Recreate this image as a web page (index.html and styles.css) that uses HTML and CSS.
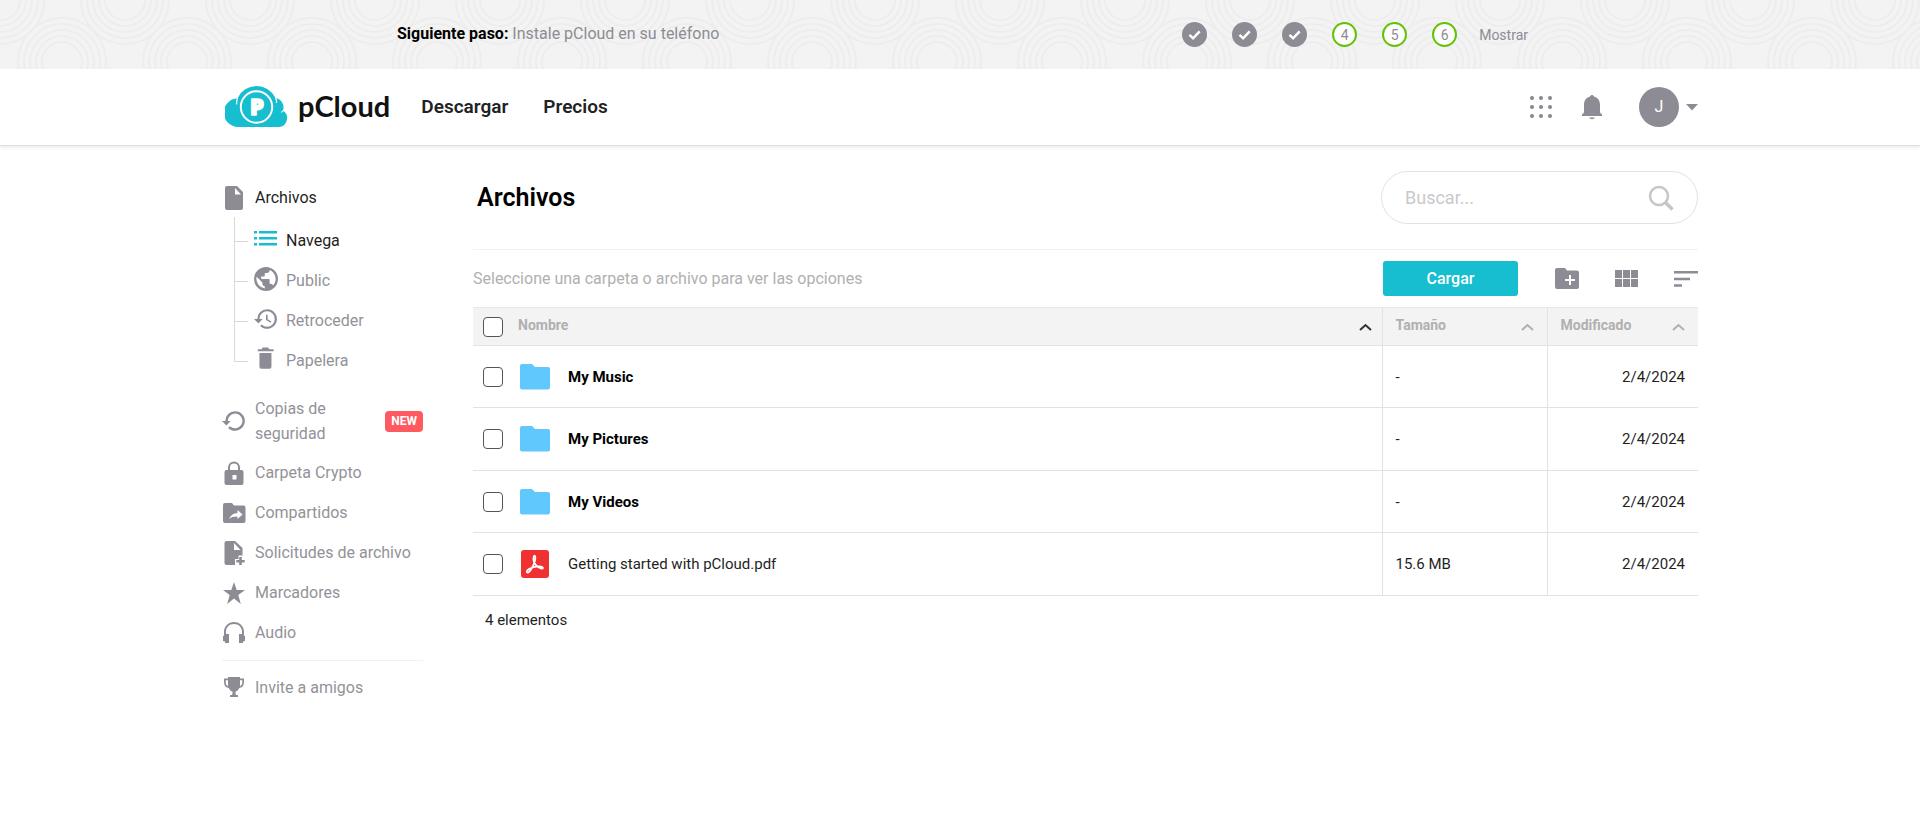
FILE: index.html
```html
<!DOCTYPE html>
<html lang="es">
<head>
<meta charset="utf-8">
<meta name="viewport" content="width=device-width, initial-scale=1">
<title>pCloud - Archivos</title>
<link rel="stylesheet" href="styles.css">
</head>
<body>
<section class="banner">
  <svg class="banner-pattern" aria-hidden="true">
    <defs>
      <pattern id="rings" width="125" height="125" patternUnits="userSpaceOnUse">
        <g fill="none" stroke="#ededed" stroke-width="2">
          <g id="ring"><circle r="20"/><circle r="26"/><circle r="32"/><circle r="38"/><circle r="44"/></g>
          <use href="#ring" x="125"/>
          <use href="#ring" x="62" y="62"/>
        </g>
      </pattern>
    </defs>
    <rect width="100%" height="100%" fill="url(#rings)"/>
  </svg>
  <div class="banner-inner">
    <p class="next-step"><strong>Siguiente paso:</strong> Instale pCloud en su teléfono</p>
    <ol class="steps">
      <li class="step done"><svg viewBox="0 0 25 25"><path d="M7.500 12.800l3.600 3.500 6.600-7"/></svg></li>
      <li class="step done"><svg viewBox="0 0 25 25"><path d="M7.500 12.800l3.600 3.500 6.600-7"/></svg></li>
      <li class="step done"><svg viewBox="0 0 25 25"><path d="M7.500 12.800l3.600 3.500 6.600-7"/></svg></li>
      <li class="step">4</li>
      <li class="step">5</li>
      <li class="step">6</li>
    </ol>
    <a class="show" href="#">Mostrar</a>
  </div>
</section>

<header class="header">
  <div class="wrap header-inner">
    <a class="logo" href="#">
      <svg width="63" height="42" viewBox="0 0 63 42" aria-hidden="true">
        <path fill="#17bed0" d="M14 41A14 14 0 0 1 12.500 12.200A21 21 0 0 1 50.500 12A9.500 9.500 0 0 1 58 24.500A9 9 0 0 1 54 41z"/>
        <path fill="none" stroke="#fff" stroke-width="1.200" stroke-linecap="round" d="M12.500 11.500q-1 3-.8 6.500M50.500 11.500q1.300 3 1 5M58.800 24.500q-1.500.3-2 1.600"/>
        <circle cx="31.500" cy="21" r="15.700" fill="none" stroke="#fff" stroke-width="2"/>
        <text class="logo-letter" x="32" y="29" text-anchor="middle">P</text>
      </svg>
      <span class="logo-name">pCloud</span>
    </a>
    <nav class="main-nav">
      <a href="#">Descargar</a>
      <a href="#">Precios</a>
    </nav>
    <div class="account">
      <button class="icon-button" aria-label="Aplicaciones">
        <svg width="24" height="24" viewBox="0 0 24 24" fill="#86868e"><circle cx="3" cy="3" r="2"/><circle cx="12" cy="3" r="2"/><circle cx="21" cy="3" r="2"/><circle cx="3" cy="12" r="2"/><circle cx="12" cy="12" r="2"/><circle cx="21" cy="12" r="2"/><circle cx="3" cy="21" r="2"/><circle cx="12" cy="21" r="2"/><circle cx="21" cy="21" r="2"/></svg>
      </button>
      <button class="icon-button bell" aria-label="Notificaciones">
        <svg width="22" height="26" viewBox="0 0 22 26" fill="#8d8c94"><path d="M11 1c1 0 1.700.6 1.900 1.500C17 3.500 19 6.700 19 11v7.500l2 2V22H1v-1.500l2-2V11c0-4.300 2-7.500 6.100-8.500C9.300 1.600 10 1 11 1z"/><path d="M8 23.500h6q-.8 1.700-3 1.700t-3-1.700z"/></svg>
      </button>
      <button class="icon-button profile" aria-label="Cuenta">
        <span class="avatar">J</span>
        <svg width="12" height="7" viewBox="0 0 12 7" fill="#8d8c94"><path d="M0 0h12L6 6.500z"/></svg>
      </button>
    </div>
  </div>
</header>

<div class="wrap page">
  <aside class="sidebar">
    <a class="item active" href="#">
      <svg class="icon" viewBox="0 0 24 24"><path d="M5 0h10l6 6v16a2 2 0 0 1-2 2H5a2 2 0 0 1-2-2V2a2 2 0 0 1 2-2zm8 2v6.500h6z"/></svg>
      <span>Archivos</span>
    </a>
    <ul class="tree">
      <li><a class="item active" href="#">
        <svg class="icon accent" viewBox="0 0 24 24"><path d="M0 4h3v2.500H0zm5 0h18v2.500H5zM0 10h3v2.500H0zm5 0h18v2.500H5zM0 16h3v2.500H0zm5 0h18v2.500H5z"/></svg>
        <span>Navega</span></a></li>
      <li><a class="item" href="#">
        <svg class="icon" viewBox="1 1 22 22"><path d="M12 1a11 11 0 1 0 0 22 11 11 0 0 0 0-22zm-1.100 19.730A8.790 8.790 0 0 1 3.200 12c0-.68.090-1.330.230-1.970L8.700 15.300v1.100c0 1.210.99 2.200 2.200 2.200v2.130zm7.590-2.790a2.180 2.180 0 0 0-2.090-1.520h-1.100v-3.300c0-.6-.5-1.100-1.100-1.100H7.600V9.800h2.200c.6 0 1.100-.5 1.100-1.100V6.500h2.200a2.200 2.200 0 0 0 2.200-2.200v-.45a8.790 8.790 0 0 1 3.190 14.090z"/></svg>
        <span>Public</span></a></li>
      <li><a class="item" href="#">
        <svg class="icon" viewBox="1 1 22 22"><path d="M13 3a9 9 0 0 0-9 9H1l3.890 3.890.070.140L9 12H6a7 7 0 1 1 7 7 6.970 6.970 0 0 1-4.940-2.060l-1.420 1.420A9 9 0 1 0 13 3zm-1 5v5l4.280 2.540.72-1.210-3.500-2.080V8z"/></svg>
        <span>Retroceder</span></a></li>
      <li><a class="item" href="#">
        <svg class="icon" viewBox="1 1 22 22"><path d="M6 19c0 1.100.9 2 2 2h7c1.100 0 2-.9 2-2V6.500H6zM19 3h-4l-1-1.500H9L8 3H4.500v2H19z"/></svg>
        <span>Papelera</span></a></li>
    </ul>
    <a class="item tall" href="#">
      <svg class="icon" viewBox="1 1 22 22"><path d="M13 3a9 9 0 0 0-9 9H1l4 4.200L9 12H6.300a6.700 6.700 0 1 1 2 4.700L6.600 18.400A9 9 0 1 0 13 3z"/></svg>
      <span>Copias de seguridad</span><em class="badge">NEW</em>
    </a>
    <a class="item" href="#">
      <svg class="icon" viewBox="0 0 24 24"><path d="M19.500 9H18V6.500a6 6 0 0 0-12 0V9H4.500A2 2 0 0 0 2.500 11v11a2 2 0 0 0 2 2h15a2 2 0 0 0 2-2V11a2 2 0 0 0-2-2zM8 9V6.500a4 4 0 0 1 8 0V9zm2.500 5h4v4.500h-4z"/></svg>
      <span>Carpeta Crypto</span>
    </a>
    <a class="item" href="#">
      <svg class="icon" viewBox="0 0 24 24"><path d="M3 2h7l2 2.500h9.500a2 2 0 0 1 2 2V20a2 2 0 0 1-2 2H3a2 2 0 0 1-2-2V4a2 2 0 0 1 2-2zm12.500 7v3c-4.500.3-7 2.500-8.500 6 2-2 4.700-2.700 8.500-2.600V18l5-4.500z"/></svg>
      <span>Compartidos</span>
    </a>
    <a class="item" href="#">
      <svg class="icon" viewBox="0 0 24 24"><path d="M4.500 0H13l7.500 7v7.500h-4V18H13v6H4.500A2 2 0 0 1 2.500 22V2a2 2 0 0 1 2-2zM12 2v7h6.500zm5.200 14h2.600v2.900h2.900v2.500h-2.900V24h-2.600v-2.600h-2.900v-2.500h2.900z"/></svg>
      <span>Solicitudes de archivo</span>
    </a>
    <a class="item" href="#">
      <svg class="icon" viewBox="0 0 24 24"><path d="M12 1l2.700 8H23l-6.700 4.900L18.800 23 12 17.500 5.200 23l2.500-9.100L1 9h8.300z"/></svg>
      <span>Marcadores</span>
    </a>
    <a class="item" href="#">
      <svg class="icon" viewBox="0 0 24 24"><path d="M12 1C6 1 2 5.500 2 11v3.500L1 15v5l2 .5V22h4v-9H4v-2c0-4.500 3.200-8 8-8s8 3.500 8 8v2h-3v9h4v-1.500l2-.5v-5l-1-.5V11C22 5.500 18 1 12 1z"/></svg>
      <span>Audio</span>
    </a>
    <hr>
    <a class="item" href="#">
      <svg class="icon" viewBox="0 0 24 24"><path d="M6 1h12v1.500h4V6c0 3.500-1.500 5.500-4.700 6-1 2-2.200 3.200-3.800 3.600V18c0 1 1.500 1 2.500 1.300V21H8v-1.700C9 19 10.500 19 10.500 18v-2.400C8.900 15.200 7.700 14 6.700 12 3.500 11.500 2 9.500 2 6V2.500h4zM3.700 4.300V6c0 2.200.6 3.400 2.300 4V4.300zm14.300 0V10c1.700-.6 2.300-1.800 2.300-4V4.300z"/></svg>
      <span>Invite a amigos</span>
    </a>
  </aside>

  <main class="content">
    <div class="title-row">
      <h1>Archivos</h1>
      <form class="search">
        <input type="search" placeholder="Buscar..." aria-label="Buscar">
        <button class="icon-button" type="button" aria-label="Buscar">
          <svg width="26" height="26" viewBox="0 0 26 26" fill="none" stroke="#c6c6c8"><circle cx="11" cy="11" r="9" stroke-width="2.500"/><path d="M17.500 17.500l7 7" stroke-width="3.500"/></svg>
        </button>
      </form>
    </div>
    <div class="toolbar">
      <p class="hint">Seleccione una carpeta o archivo para ver las opciones</p>
      <button class="upload">Cargar</button>
      <div class="tools">
        <button class="icon-button" aria-label="Nueva carpeta"><svg width="24" height="21" viewBox="0 0 24 21" fill="#8d8c94"><path d="M2 0h8l2 2.500h10a2 2 0 0 1 2 2V19a2 2 0 0 1-2 2H2a2 2 0 0 1-2-2V2a2 2 0 0 1 2-2zm12 7v4h-4v2h4v4h2v-4h4v-2h-4V7z"/></svg></button>
        <button class="icon-button" aria-label="Vista de cuadrícula"><svg width="23" height="17" viewBox="0 0 23 17" fill="#8d8c94"><path d="M0 0h7v8H0zm8 0h7v8H8zm8 0h7v8h-7zM0 9h7v8H0zm8 0h7v8H8zm8 0h7v8h-7z"/></svg></button>
        <button class="icon-button" aria-label="Ordenar"><svg width="24" height="16" viewBox="0 0 24 16" fill="#8d8c94"><path d="M0 0h24v2.500H0zm0 6.700h16v2.500H0zm0 6.500h8v2.500H0z"/></svg></button>
      </div>
    </div>
    <table class="files">
      <colgroup><col class="col-check"><col><col class="col-size"><col class="col-date"></colgroup>
      <thead>
        <tr>
          <th class="check"><input type="checkbox" aria-label="Seleccionar todo"></th>
          <th class="name-head"><button class="sort sorted"><span>Nombre</span> <svg width="13" height="8" viewBox="0 0 13 8"><path d="M1 7l5.500-5L12 7"/></svg></button></th>
          <th><button class="sort"><span>Tamaño</span> <svg width="13" height="8" viewBox="0 0 13 8"><path d="M1 7l5.500-5L12 7"/></svg></button></th>
          <th><button class="sort"><span>Modificado</span> <svg width="13" height="8" viewBox="0 0 13 8"><path d="M1 7l5.500-5L12 7"/></svg></button></th>
        </tr>
      </thead>
      <tbody>
        <tr>
          <td class="check"><input type="checkbox" id="f1"></td>
          <td class="name"><label for="f1"><svg width="30" height="26" viewBox="0 0 30 26"><path fill="#60c8fd" d="M2 0h10l3 3h13a2 2 0 0 1 2 2v18.500a2 2 0 0 1-2 2H2a2 2 0 0 1-2-2V2a2 2 0 0 1 2-2z"/></svg><b>My Music</b></label></td>
          <td>-</td><td class="date">2/4/2024</td>
        </tr>
        <tr>
          <td class="check"><input type="checkbox" id="f2"></td>
          <td class="name"><label for="f2"><svg width="30" height="26" viewBox="0 0 30 26"><path fill="#60c8fd" d="M2 0h10l3 3h13a2 2 0 0 1 2 2v18.500a2 2 0 0 1-2 2H2a2 2 0 0 1-2-2V2a2 2 0 0 1 2-2z"/></svg><b>My Pictures</b></label></td>
          <td>-</td><td class="date">2/4/2024</td>
        </tr>
        <tr>
          <td class="check"><input type="checkbox" id="f3"></td>
          <td class="name"><label for="f3"><svg width="30" height="26" viewBox="0 0 30 26"><path fill="#60c8fd" d="M2 0h10l3 3h13a2 2 0 0 1 2 2v18.500a2 2 0 0 1-2 2H2a2 2 0 0 1-2-2V2a2 2 0 0 1 2-2z"/></svg><b>My Videos</b></label></td>
          <td>-</td><td class="date">2/4/2024</td>
        </tr>
        <tr>
          <td class="check"><input type="checkbox" id="f4"></td>
          <td class="name"><label for="f4"><svg width="30" height="28" viewBox="0 0 30 28"><rect x="1" width="28" height="28" rx="3" fill="#ef3131"/><path fill="none" stroke="#fff" stroke-width="1.700" stroke-linejoin="round" d="M7.300 22.500c-1.800-1 .8-3.700 4.600-4.800 4-1.200 8.300-1.600 10.200-.8 1.700.8 1 2-.7 1.800-3.300-.4-8-5.300-8-9 0-2 .4-4.200 1.100-4.200 1.100 0 1.200 3.300.2 6.200-1.600 4.700-5.500 12-7.400 10.800z"/></svg><span>Getting started with pCloud.pdf</span></label></td>
          <td>15.6 MB</td><td class="date">2/4/2024</td>
        </tr>
      </tbody>
    </table>
    <p class="count">4 elementos</p>
  </main>
</div>
</body>
</html>
```
FILE: styles.css
```css
* { box-sizing: border-box; }

body {
  margin: 0;
  background: #fff;
  color: #1f1f1f;
  font: 16px/24px Roboto, "Liberation Sans", sans-serif;
}

a { color: inherit; text-decoration: none; }
p, h1, ol, ul { margin: 0; padding: 0; }
ol, ul { list-style: none; }
svg { display: block; flex: none; }

button {
  border: 0;
  padding: 0;
  background: none;
  color: inherit;
  font: inherit;
  cursor: pointer;
}

.wrap {
  width: 100%;
  max-width: 1516px;
  margin: 0 auto;
  padding: 0 20px;
}

.icon-button { display: flex; align-items: center; }

/* Onboarding banner */
.banner {
  position: relative;
  background: #f3f3f3;
  color: #8d8c94;
}
.banner-pattern {
  position: absolute;
  inset: 0;
  width: 100%;
  height: 100%;
}
.banner-inner {
  position: relative;
  display: flex;
  align-items: center;
  max-width: 1170px;
  min-height: 69px;
  margin: 0 auto;
  padding: 0 17px 0 22px;
}
.next-step { padding-bottom: 2px; }
.next-step strong { color: #000; font-weight: 700; }
.steps { display: flex; gap: 25px; margin-left: auto; }
.step {
  display: flex;
  align-items: center;
  justify-content: center;
  width: 25px;
  height: 25px;
  border: 2px solid #64c206;
  border-radius: 50%;
  background: #fff;
  font-size: 14px;
}
.step.done { border: 0; background: #8d8c94; }
.step svg { width: 25px; height: 25px; fill: none; stroke: #fff; stroke-width: 2.5; }
.show { margin-left: 22px; font-size: 14px; }

/* Header */
.header {
  border-bottom: 1px solid #dedede;
  background: #fff;
  box-shadow: 0 2px 3px rgba(0, 0, 0, .07);
}
.header-inner { display: flex; align-items: center; min-height: 76px; }
.logo { display: flex; align-items: center; gap: 10px; padding-left: 3px; }
.logo-letter {
  font: 900 22px "Open Sans", sans-serif;
  fill: #fff;
  stroke: #fff;
  stroke-width: 1.5;
  stroke-linejoin: round;
}
.logo-name {
  padding-bottom: 2px;
  color: #111;
  font: 700 29px/36px Lato, sans-serif;
}
.main-nav {
  display: flex;
  gap: 35px;
  margin-left: 31px;
  color: #222;
  font-size: 19px;
  font-weight: 600;
}
.account { display: flex; align-items: center; margin-left: auto; }
.bell { margin-left: 28px; }
.profile { gap: 7px; margin-left: 36px; }
.avatar {
  width: 40px;
  height: 40px;
  border-radius: 50%;
  background: #8d8c94;
  color: #fff;
  line-height: 40px;
  text-align: center;
}

/* Page */
.page { display: flex; gap: 50px; padding-top: 25px; }

.sidebar { flex: none; width: 201px; padding-top: 7px; color: #939298; }
.item {
  display: flex;
  align-items: center;
  gap: 9px;
  min-height: 40px;
}
.item.tall { min-height: 64px; line-height: 25px; }
.item.active { color: #1f1f1f; }
.icon { width: 24px; height: 24px; fill: #8d8c94; }
.icon.accent { fill: #17bed0; }
.tree { margin: 3px 0 8px 12px; }
.tree li { position: relative; padding-left: 20px; }
.tree .item { gap: 8px; }
.tree .icon { margin-bottom: 4px; }
.tree li::before,
.tree li::after { content: ""; position: absolute; left: 0; background: #d8d8d8; }
.tree li::before { top: 0; width: 1px; height: 100%; }
.tree li:first-child::before { top: -4px; height: 44px; }
.tree li:last-child::before { height: 50%; }
.tree li::after { top: 50%; width: 14px; height: 1px; }
.tall span { flex: 1; }
.badge {
  padding: 0 6px;
  border-radius: 4px;
  background: #ff5a5f;
  color: #fff;
  font-size: 12px;
  font-style: normal;
  font-weight: 700;
  line-height: 21px;
}
.sidebar hr { margin: 7px 0; border: 0; border-top: 1px solid #f1f1f1; }

.content { flex: 1; min-width: 0; }
.title-row {
  display: flex;
  align-items: center;
  justify-content: space-between;
  padding: 0 0 25px 4px;
  border-bottom: 1px solid #f2f2f2;
}
h1 { color: #000; font-size: 25px; font-weight: 600; line-height: 32px; }
.search {
  display: flex;
  align-items: center;
  width: 317px;
  height: 53px;
  padding: 0 23px;
  border: 1px solid #e2e2e2;
  border-radius: 27px;
}
.search input {
  flex: 1;
  min-width: 0;
  padding: 0;
  border: 0;
  outline: 0;
  background: none;
  font: inherit;
  font-size: 18px;
}
.search input::placeholder { color: #c9c9cb; opacity: 1; }

.toolbar { display: flex; align-items: center; min-height: 57px; }
.hint { flex: 1; color: #b0b0b0; }
.upload {
  width: 135px;
  height: 35px;
  border-radius: 3px;
  background: #17bed0;
  color: #fff;
  font-weight: 500;
}
.tools { display: flex; gap: 36px; margin-left: 37px; }

.files {
  width: 100%;
  border-collapse: collapse;
  table-layout: fixed;
  font-size: 15px;
}
.col-check { width: 45px; }
.col-size { width: 165px; }
.col-date { width: 151px; }
.files th {
  height: 38px;
  padding: 0 13px;
  border-top: 1px solid #e8e8e8;
  border-bottom: 1px solid #e2e2e2;
  background: #f3f3f3;
}
.files td {
  height: 62px;
  padding: 0 13px;
  border-bottom: 1px solid #e2e2e2;
}
.files tbody tr:nth-child(even) td { height: 63px; }
.files th:nth-child(n+3),
.files td:nth-child(n+3) { border-left: 1px solid #e2e2e2; }
.files .check { padding: 0 0 0 10px; }
.files .name-head { padding: 0 10px 0 0; }
.files .name { padding-left: 2px; }
.files .date { text-align: right; }
.files input {
  display: block;
  appearance: none;
  width: 20px;
  height: 20px;
  margin: 0;
  border: 1px solid #555;
  border-radius: 4px;
  background: #fff;
}
.name label { display: flex; align-items: center; gap: 18px; }
.name b { color: #000; font-weight: 700; }
.sort {
  display: flex;
  align-items: center;
  justify-content: space-between;
  width: 100%;
  color: #b0b0b0;
  font-size: 14px;
  font-weight: 700;
}
.sort span { padding-bottom: 3px; }
.sort svg { fill: none; stroke: #b0b0b0; stroke-width: 2; }
.sort.sorted svg { stroke: #333; }

.count { padding: 12px; font-size: 15px; }
```
